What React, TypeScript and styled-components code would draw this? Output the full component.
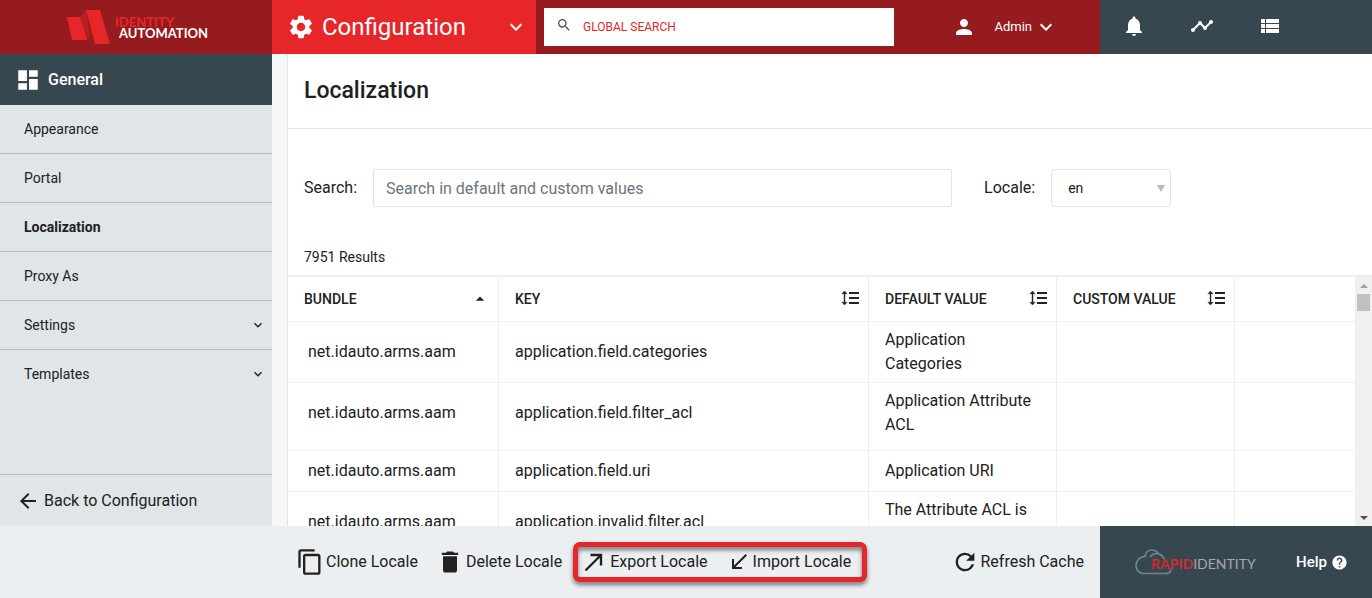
import React from "react";
import styled, { createGlobalStyle, css } from "styled-components";
import {
  MdArrowBack,
  MdArrowDropUp,
  MdCallMade,
  MdCallReceived,
  MdContentCopy,
  MdDashboard,
  MdDelete,
  MdHelp,
  MdKeyboardArrowDown,
  MdNotifications,
  MdPerson,
  MdRefresh,
  MdSearch,
  MdSettings,
  MdTimeline,
  MdViewList,
} from "react-icons/md";

const color = {
  brand: "#961b1e",
  accent: "#e62629",
  slate: "#37474f",
  side: "#e0e5e8",
  sideLine: "#b0bec5",
  line: "#eceff1",
  fieldLine: "#e0e5e8",
  footer: "#ebeff2",
  page: "#f5f7f9",
  ink: "#212121",
};

const GlobalStyle = createGlobalStyle`
  *, *::before, *::after { box-sizing: border-box; }
  body {
    margin: 0;
    font-family: Roboto, "Liberation Sans", sans-serif;
    font-size: 16px;
    line-height: 24px;
    color: ${color.ink};
    background: ${color.page};
  }
  button, input, select { font: inherit; color: inherit; }
  button { border: 0; padding: 0; background: none; cursor: pointer; }
  a { color: inherit; text-decoration: none; }
  svg { display: block; flex: none; }
`;

const Page = styled.div`
  display: grid;
  grid-template-rows: 54px minmax(0, 1fr) 72px;
  height: 100vh;
`;

/* Top bar */
const TopBar = styled.header`
  display: flex;
  background: ${color.brand};
  color: #fff;
`;

const Brand = styled.a`
  display: flex;
  align-items: center;
  gap: 5px;
  width: 272px;
  padding-left: 66px;
`;

const BrandName = styled.span`
  display: flex;
  flex-direction: column;
  padding-top: 2px;
  font-family: Lato, sans-serif;
  font-size: 13px;
  font-weight: 700;
  line-height: 11px;
`;

const BrandFirst = styled.span`
  color: ${color.accent};
`;

const BrandSecond = styled.span`
  padding-left: 4px;
`;

const ModuleButton = styled.button`
  display: flex;
  align-items: center;
  width: 264px;
  padding: 0 8px 0 15px;
  gap: 7px;
  background: ${color.accent};
  font-size: 24px;
  color: #fff;
`;

const ModuleName = styled.span`
  flex: 1;
  text-align: left;
`;

const SearchBox = styled.label`
  display: flex;
  align-items: center;
  gap: 11px;
  width: 350px;
  margin: 8px;
  padding: 0 12px;
  background: #fff;
  color: #555;
  & > svg { margin-bottom: 4px; }
`;

const SearchInput = styled.input`
  flex: 1;
  min-width: 0;
  border: 0;
  padding: 0;
  outline: 0;
  background: none;
  font-size: 12px;
  color: ${color.accent};
  &::placeholder { color: ${color.accent}; opacity: 1; }
`;

const UserButton = styled.button`
  display: flex;
  align-items: center;
  gap: 2px;
  margin-left: auto;
  padding-right: 42px;
  font-size: 13px;
  color: #fff;
`;

const UserName = styled.span`
  padding-left: 16px;
`;

const Tools = styled.nav`
  display: grid;
  grid-template-columns: repeat(4, 68px);
  width: 272px;
  padding-bottom: 2px;
  background: ${color.slate};
`;

const ToolButton = styled.button`
  display: grid;
  place-items: center;
  color: #fff;
`;

/* Body */
const Body = styled.div`
  display: flex;
  gap: 15px;
  min-height: 0;
`;

const Sidebar = styled.aside`
  display: flex;
  flex-direction: column;
  flex: none;
  width: 272px;
  background: ${color.side};
`;

const SideTitle = styled.h2`
  display: flex;
  align-items: center;
  gap: 7px;
  height: 51px;
  margin: 0;
  padding-left: 15px;
  background: ${color.slate};
  color: #fff;
  font-size: 16px;
  font-weight: 500;
`;

const SideNav = styled.nav`
  flex: 1;
`;

const SideLink = styled.a<{ $active?: boolean }>`
  display: flex;
  align-items: center;
  justify-content: space-between;
  height: 49px;
  padding: 0 6px 0 24px;
  border-bottom: 1px solid ${color.sideLine};
  font-size: 14px;
  font-weight: ${(p) => (p.$active ? 700 : 400)};
  &:last-child { border-bottom-color: transparent; }
`;

const BackLink = styled.a`
  display: flex;
  align-items: center;
  gap: 4px;
  height: 52px;
  padding-left: 16px;
  border-top: 1px solid ${color.sideLine};
`;

const Main = styled.main`
  display: flex;
  flex-direction: column;
  flex: 1;
  min-width: 0;
  border-left: 1px solid ${color.fieldLine};
  background: #fff;
`;

const TitleBar = styled.div`
  display: flex;
  align-items: center;
  flex: none;
  height: 75px;
  padding-left: 16px;
  border-bottom: 1px solid ${color.fieldLine};
`;

const Title = styled.h1`
  margin: 0;
  font-size: 23px;
  font-weight: 500;
`;

const Filters = styled.form`
  display: flex;
  align-items: center;
  gap: 16px;
  width: 80%;
  margin: 40px 0 0 16px;
`;

const LocaleLabel = styled.label`
  padding-left: 16px;
`;

const field = css`
  height: 38px;
  border: 1px solid ${color.fieldLine};
  background-color: #fff;
`;

const ValueInput = styled.input`
  ${field}
  flex: 1;
  min-width: 0;
  padding: 0 12px;
  border-radius: 1px;
  &::placeholder { color: #6c757d; opacity: 1; }
`;

const SelectWrap = styled.div`
  position: relative;
  width: 120px;
`;

const Select = styled.select`
  ${field}
  display: block;
  width: 100%;
  padding: 0 16px;
  border-radius: 4px;
  appearance: none;
  font-size: 14px;
`;

const SelectArrow = styled.svg`
  position: absolute;
  top: 16px;
  right: 6px;
  pointer-events: none;
`;

const ResultCount = styled.p`
  margin: 38px 0 6px 16px;
  font-size: 14px;
`;

const GridArea = styled.div`
  display: flex;
  flex: 1;
  min-height: 0;
  overflow: hidden;
  border-top: 2px solid ${color.line};
`;

const Table = styled.table`
  flex: 1;
  align-self: flex-start;
  table-layout: fixed;
  border-collapse: separate;
  border-spacing: 0;
`;

const HeadCell = styled.th<{ $width?: number }>`
  width: ${(p) => (p.$width ? `${p.$width}px` : "auto")};
  height: 45px;
  padding: 0 8px 0 16px;
  border-bottom: 1px solid ${color.line};
  font-size: 14px;
  font-weight: 500;
  text-align: left;
  &:not(:last-child) { border-right: 1px solid ${color.line}; }
`;

const SortButton = styled.button`
  display: flex;
  align-items: center;
  justify-content: space-between;
  width: 100%;
`;

const Row = styled.tr<{ $height: number; $tail?: number }>`
  height: ${(p) => p.$height}px;
  & > td { padding-bottom: ${(p) => p.$tail ?? 6}px; }
`;

const Cell = styled.td<{ $indent?: boolean; $top?: boolean }>`
  padding: 6px 16px 6px ${(p) => (p.$indent ? 20 : 16)}px;
  border-bottom: 1px solid ${color.line};
  vertical-align: ${(p) => (p.$top ? "top" : "middle")};
  &:not(:last-child) { border-right: 1px solid ${color.line}; }
`;

const ScrollTrack = styled.div`
  display: flex;
  flex-direction: column;
  align-items: center;
  flex: none;
  width: 17px;
  background: #f0f0f0;
`;

const ScrollStep = styled.button`
  display: grid;
  place-items: center;
  width: 17px;
  height: 17px;
  &:last-child { margin-top: auto; }
`;

const ScrollThumb = styled.div`
  width: 13px;
  height: 17px;
  background: #c1c1c1;
`;

/* Footer */
const Footer = styled.footer`
  display: flex;
  background: ${color.footer};
`;

const Actions = styled.div`
  display: flex;
  align-items: center;
  flex: 1;
  gap: 18px;
  padding: 0 16px 0 296px;
`;

const Transfer = styled.div`
  position: relative;
  display: flex;
  align-items: center;
  gap: 19px;
`;

const Highlight = styled.div`
  position: absolute;
  inset: -6px -16px -6px -7px;
  border: 5px solid ${color.accent};
  border-radius: 7px;
  filter: drop-shadow(0 3px 2px rgba(0, 0, 0, 0.5));
  pointer-events: none;
`;

const ActionButton = styled.button<{ $end?: boolean }>`
  display: flex;
  align-items: center;
  gap: 2px;
  height: 28px;
  white-space: nowrap;
  margin-left: ${(p) => (p.$end ? "auto" : "0")};
`;

const Product = styled.div`
  display: flex;
  align-items: center;
  justify-content: space-between;
  width: 272px;
  padding: 0 24px 0 34px;
  background: ${color.slate};
  color: #fff;
`;

const ProductLogo = styled.span`
  display: flex;
  align-items: center;
`;

const ProductName = styled.span`
  margin: 4px 0 0 -23px;
  font-family: Lato, sans-serif;
  font-size: 14px;
  color: #a3a9ac;
`;

const ProductAccent = styled.span`
  color: #d3292d;
  font-weight: 700;
`;

const HelpLink = styled.a`
  display: flex;
  align-items: center;
  gap: 4px;
  font-size: 15px;
  font-weight: 500;
`;

function BrandMark() {
  return (
    <svg width="44" height="36" viewBox="0 0 44 36" aria-hidden="true">
      <path d="M14 8 20 1l4 26-4 4z" fill="#b52023" />
      <path d="M1 8h13l7 23H6z" fill="#e62629" />
      <path d="M20 1h14l10 34H29z" fill="#e62629" />
    </svg>
  );
}

function SortIcon() {
  return (
    <svg width="19" height="18" viewBox="0 0 19 18" fill="none" stroke="#212121" aria-hidden="true">
      <path d="M3.5 2v12" strokeWidth="1.4" />
      <path d="M.8 3.8 3.5 1l2.7 2.8zM.8 12.2 3.5 15l2.7-2.8z" fill="#212121" strokeWidth="0.4" />
      <path d="M8 3h10M8 8h10M8 13h10" strokeWidth="2" />
    </svg>
  );
}

function CloudIcon() {
  return (
    <svg width="40" height="28" viewBox="0 0 40 28" fill="none" stroke="#6d8592" strokeWidth="1.7" strokeLinecap="round" aria-hidden="true">
      <path d="M37 21.5c-.5 2.6-2.5 4-5 4H9.5C5 25.5 2 22 2 17.5S5.500 8.500 11 8.300C11.500 4.500 14.500 2 18 2c2.800 0 4.700 1.200 6 3.200" />
      <path d="M16.500 8.500C18.500 6 22 5 25 6c2.700.9 4.300 2.700 5 4.800" />
    </svg>
  );
}

function Triangle({ up, fill }: { up?: boolean; fill: string }) {
  return (
    <svg width="8" height="4" viewBox="0 0 8 4" aria-hidden="true">
      <path d={up ? "M0 4h8L4 0z" : "M0 0h8L4 4z"} fill={fill} />
    </svg>
  );
}

const navItems = [
  { label: "Appearance" },
  { label: "Portal" },
  { label: "Localization", active: true },
  { label: "Proxy As" },
  { label: "Settings", expandable: true },
  { label: "Templates", expandable: true },
];

const columns = [
  { label: "BUNDLE", width: 211, sorted: true },
  { label: "KEY", width: 370 },
  { label: "DEFAULT VALUE", width: 188 },
  { label: "CUSTOM VALUE", width: 178 },
];

const rows = [
  { key: "application.field.categories", value: "Application Categories", height: 61 },
  { key: "application.field.filter_acl", value: "Application Attribute ACL", height: 68, tail: 13 },
  { key: "application.field.uri", value: "Application URI", height: 41 },
  { key: "application.invalid.filter.acl", value: "The Attribute ACL is", height: 61, top: true },
];

export default function App() {
  return (
    <>
      <GlobalStyle />
      <Page>
        <TopBar>
          <Brand href="#">
            <BrandMark />
            <BrandName>
              <BrandFirst>IDENTITY</BrandFirst>
              <BrandSecond>AUTOMATION</BrandSecond>
            </BrandName>
          </Brand>
          <ModuleButton type="button">
            <MdSettings size={28} />
            <ModuleName>Configuration</ModuleName>
            <MdKeyboardArrowDown size={24} />
          </ModuleButton>
          <SearchBox>
            <MdSearch size={16} />
            <SearchInput type="text" placeholder="GLOBAL SEARCH" aria-label="Global search" />
          </SearchBox>
          <UserButton type="button">
            <MdPerson size={24} />
            <UserName>Admin</UserName>
            <MdKeyboardArrowDown size={24} />
          </UserButton>
          <Tools aria-label="Tools">
            <ToolButton type="button" aria-label="Notifications"><MdNotifications size={24} /></ToolButton>
            <ToolButton type="button" aria-label="Activity"><MdTimeline size={24} /></ToolButton>
            <ToolButton type="button" aria-label="List"><MdViewList size={24} /></ToolButton>
          </Tools>
        </TopBar>

        <Body>
          <Sidebar>
            <SideTitle><MdDashboard size={26} />General</SideTitle>
            <SideNav aria-label="General">
              {navItems.map((item) => (
                <SideLink key={item.label} href="#" $active={item.active}>
                  {item.label}
                  {item.expandable && <MdKeyboardArrowDown size={16} />}
                </SideLink>
              ))}
            </SideNav>
            <BackLink href="#"><MdArrowBack size={24} />Back to Configuration</BackLink>
          </Sidebar>

          <Main>
            <TitleBar><Title>Localization</Title></TitleBar>
            <Filters>
              <label htmlFor="value-search">Search:</label>
              <ValueInput id="value-search" type="text" placeholder="Search in default and custom values" />
              <LocaleLabel htmlFor="locale">Locale:</LocaleLabel>
              <SelectWrap>
                <Select id="locale" defaultValue="en">
                  <option value="en">en</option>
                </Select>
                <SelectArrow width="8" height="7" viewBox="0 0 8 7" aria-hidden="true">
                  <path d="M0 0h8L4 7z" fill="#b0bec5" />
                </SelectArrow>
              </SelectWrap>
            </Filters>
            <ResultCount>7951 Results</ResultCount>
            <GridArea>
              <Table>
                <thead>
                  <tr>
                    {columns.map((column) => (
                      <HeadCell key={column.label} scope="col" $width={column.width}>
                        <SortButton type="button">
                          {column.label}
                          {column.sorted ? <MdArrowDropUp size={20} /> : <SortIcon />}
                        </SortButton>
                      </HeadCell>
                    ))}
                    <HeadCell />
                  </tr>
                </thead>
                <tbody>
                  {rows.map((row) => (
                    <Row key={row.key} $height={row.height} $tail={row.tail}>
                      <Cell $indent>net.idauto.arms.aam</Cell>
                      <Cell>{row.key}</Cell>
                      <Cell $top={row.top}>{row.value}</Cell>
                      <Cell />
                      <Cell />
                    </Row>
                  ))}
                </tbody>
              </Table>
              <ScrollTrack>
                <ScrollStep type="button" aria-label="Scroll up"><Triangle up fill="#a3a3a3" /></ScrollStep>
                <ScrollThumb />
                <ScrollStep type="button" aria-label="Scroll down"><Triangle fill="#505050" /></ScrollStep>
              </ScrollTrack>
            </GridArea>
          </Main>
        </Body>

        <Footer>
          <Actions>
            <ActionButton type="button"><MdContentCopy size={28} />Clone Locale</ActionButton>
            <ActionButton type="button"><MdDelete size={28} />Delete Locale</ActionButton>
            <Transfer>
              <ActionButton type="button"><MdCallMade size={28} />Export Locale</ActionButton>
              <ActionButton type="button"><MdCallReceived size={24} />Import Locale</ActionButton>
              <Highlight />
            </Transfer>
            <ActionButton type="button" $end><MdRefresh size={28} />Refresh Cache</ActionButton>
          </Actions>
          <Product>
            <ProductLogo>
              <CloudIcon />
              <ProductName><ProductAccent>RAPID</ProductAccent>IDENTITY</ProductName>
            </ProductLogo>
            <HelpLink href="#">Help<MdHelp size={17} /></HelpLink>
          </Product>
        </Footer>
      </Page>
    </>
  );
}
